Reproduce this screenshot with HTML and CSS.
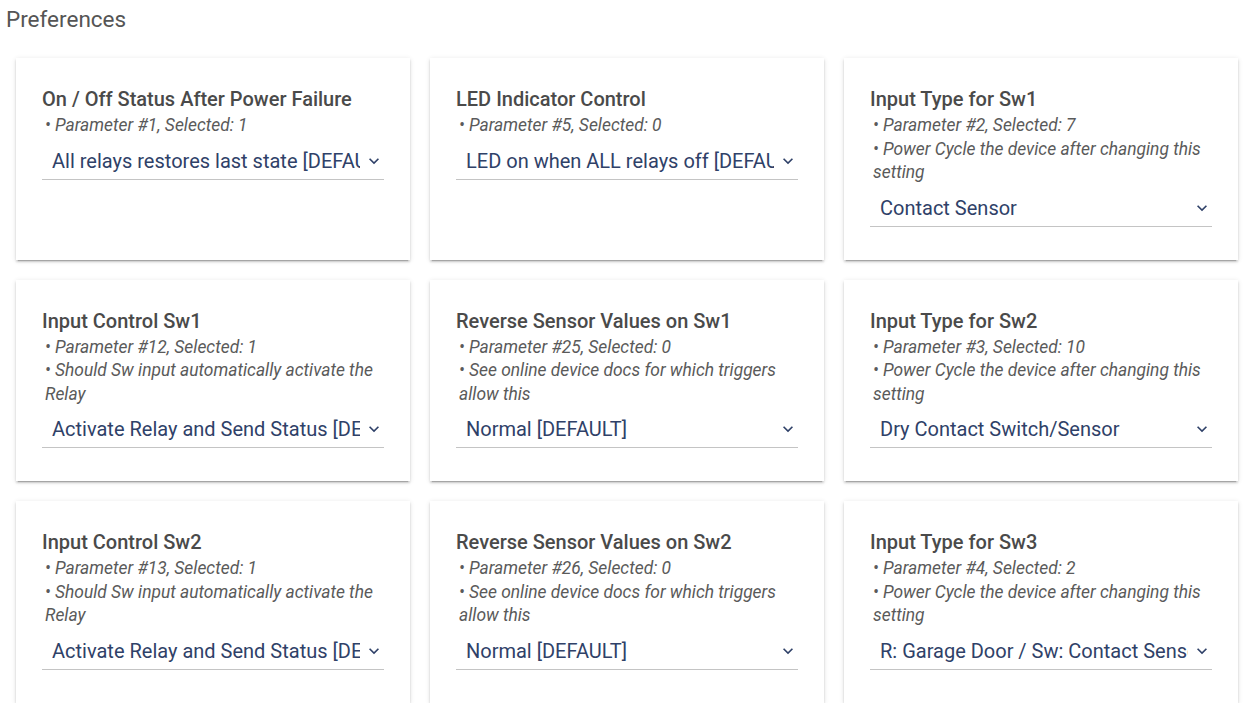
FILE: index.html
```html
<!DOCTYPE html>
<html>
<head>
<meta charset="utf-8">
<link rel="stylesheet" href="styles.css">
</head>
<body>
<h1 class="page-title">Preferences</h1>
<div class="grid">
  <div class="card">
    <div class="card-title">On / Off Status After Power Failure</div>
    <div class="note">• Parameter #1, Selected: 1</div>
    <div class="select"><span class="select-text">All relays restores last state [DEFAULT]</span><svg class="chev" viewBox="0 0 24 24"><path d="M7.4 8.6 12 13.2l4.6-4.6L18 10l-6 6-6-6z"/></svg></div>
  </div>
  <div class="card">
    <div class="card-title">LED Indicator Control</div>
    <div class="note">• Parameter #5, Selected: 0</div>
    <div class="select"><span class="select-text">LED on when ALL relays off [DEFAULT]</span><svg class="chev" viewBox="0 0 24 24"><path d="M7.4 8.6 12 13.2l4.6-4.6L18 10l-6 6-6-6z"/></svg></div>
  </div>
  <div class="card">
    <div class="card-title">Input Type for Sw1</div>
    <div class="note">• Parameter #2, Selected: 7</div>
    <div class="note">• Power Cycle the device after changing this setting</div>
    <div class="select"><span class="select-text">Contact Sensor</span><svg class="chev" viewBox="0 0 24 24"><path d="M7.4 8.6 12 13.2l4.6-4.6L18 10l-6 6-6-6z"/></svg></div>
  </div>
  <div class="card">
    <div class="card-title">Input Control Sw1</div>
    <div class="note">• Parameter #12, Selected: 1</div>
    <div class="note">• Should Sw input automatically activate the Relay</div>
    <div class="select"><span class="select-text">Activate Relay and Send Status [DEFAULT]</span><svg class="chev" viewBox="0 0 24 24"><path d="M7.4 8.6 12 13.2l4.6-4.6L18 10l-6 6-6-6z"/></svg></div>
  </div>
  <div class="card">
    <div class="card-title">Reverse Sensor Values on Sw1</div>
    <div class="note">• Parameter #25, Selected: 0</div>
    <div class="note">• See online device docs for which triggers allow this</div>
    <div class="select"><span class="select-text">Normal [DEFAULT]</span><svg class="chev" viewBox="0 0 24 24"><path d="M7.4 8.6 12 13.2l4.6-4.6L18 10l-6 6-6-6z"/></svg></div>
  </div>
  <div class="card">
    <div class="card-title">Input Type for Sw2</div>
    <div class="note">• Parameter #3, Selected: 10</div>
    <div class="note">• Power Cycle the device after changing this setting</div>
    <div class="select"><span class="select-text">Dry Contact Switch/Sensor</span><svg class="chev" viewBox="0 0 24 24"><path d="M7.4 8.6 12 13.2l4.6-4.6L18 10l-6 6-6-6z"/></svg></div>
  </div>
  <div class="card">
    <div class="card-title">Input Control Sw2</div>
    <div class="note">• Parameter #13, Selected: 1</div>
    <div class="note">• Should Sw input automatically activate the Relay</div>
    <div class="select"><span class="select-text">Activate Relay and Send Status [DEFAULT]</span><svg class="chev" viewBox="0 0 24 24"><path d="M7.4 8.6 12 13.2l4.6-4.6L18 10l-6 6-6-6z"/></svg></div>
  </div>
  <div class="card">
    <div class="card-title">Reverse Sensor Values on Sw2</div>
    <div class="note">• Parameter #26, Selected: 0</div>
    <div class="note">• See online device docs for which triggers allow this</div>
    <div class="select"><span class="select-text">Normal [DEFAULT]</span><svg class="chev" viewBox="0 0 24 24"><path d="M7.4 8.6 12 13.2l4.6-4.6L18 10l-6 6-6-6z"/></svg></div>
  </div>
  <div class="card">
    <div class="card-title">Input Type for Sw3</div>
    <div class="note">• Parameter #4, Selected: 2</div>
    <div class="note">• Power Cycle the device after changing this setting</div>
    <div class="select"><span class="select-text">R: Garage Door / Sw: Contact Sensor</span><svg class="chev" viewBox="0 0 24 24"><path d="M7.4 8.6 12 13.2l4.6-4.6L18 10l-6 6-6-6z"/></svg></div>
  </div>
</div>
</body>
</html>
```
FILE: styles.css
```css
html, body {
  margin: 0;
  padding: 0;
  background: #fff;
  font-family: Roboto, "Liberation Sans", Arial, sans-serif;
}
.page-title {
  margin: 0;
  padding: 6px 0 0 6px;
  font-size: 22.5px;
  line-height: 26px;
  font-weight: 400;
  color: #555;
}
.grid {
  display: grid;
  grid-template-columns: repeat(3, 394px);
  column-gap: 20px;
  row-gap: 20px;
  padding: 26px 0 0 16px;
}
.card {
  background: #fff;
  padding: 29px 26px 33px;
  box-shadow: 0 3px 1px -2px rgba(0,0,0,.2), 0 2px 2px 0 rgba(0,0,0,.14), 0 1px 5px 0 rgba(0,0,0,.12);
  display: flex;
  flex-direction: column;
}
.card-title {
  font-size: 20px;
  line-height: 24px;
  font-weight: 500;
  color: #4a4a4a;
  margin-bottom: 3px;
}
.note {
  font-size: 17.4px;
  line-height: 23.5px;
  font-style: italic;
  color: #5a5a5a;
  padding-left: 3px;
}
.select {
  margin-top: 5px;
  height: 36px;
  border-bottom: 1px solid #c4c4c4;
  display: flex;
  align-items: center;
  padding-left: 10px;
}
.select-text {
  flex: 1;
  overflow: hidden;
  white-space: nowrap;
  font-size: 20px;
  color: #2f4168;
  margin-right: 4px;
}
.chev {
  width: 20px;
  height: 20px;
  fill: #2f4168;
  flex: none;
}
```
